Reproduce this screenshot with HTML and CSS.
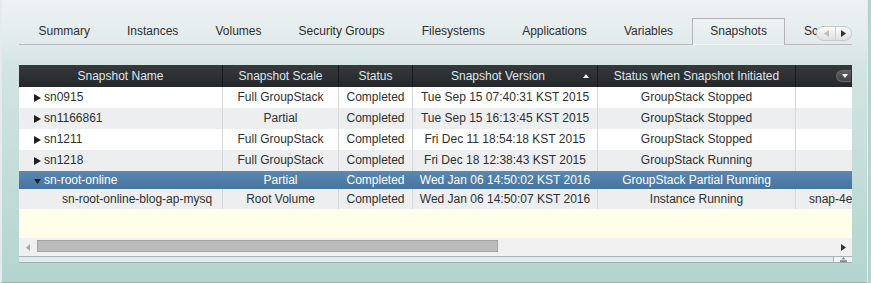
FILE: index.html
```html
<!DOCTYPE html>
<html>
<head>
<meta charset="utf-8">
<title>Snapshots</title>
<link rel="stylesheet" href="styles.css">
</head>
<body>
<div class="panel">
  <div class="tabbar">
    <div class="tabs">
      <div class="tab">Summary</div>
      <div class="tab">Instances</div>
      <div class="tab">Volumes</div>
      <div class="tab">Security Groups</div>
      <div class="tab">Filesystems</div>
      <div class="tab">Applications</div>
      <div class="tab">Variables</div>
      <div class="tab active">Snapshots</div>
      <div class="tab">Scripts</div>
    </div>
    <div class="tab-scroller">
      <span class="ts-btn ts-prev"><svg width="5" height="7" viewBox="0 0 5 7"><path d="M5 0V7L0 3.5Z"/></svg></span>
      <span class="ts-btn ts-next"><svg width="5" height="7" viewBox="0 0 5 7"><path d="M0 0V7L5 3.5Z"/></svg></span>
    </div>
  </div>

  <div class="grid">
    <div class="grid-row grid-head">
      <div class="cell">Snapshot Name</div>
      <div class="cell">Snapshot Scale</div>
      <div class="cell">Status</div>
      <div class="cell sorted"><span class="label">Snapshot Version</span><span class="sort"><svg width="6" height="4" viewBox="0 0 6 4"><path d="M0 4L3 0L6 4Z"/></svg></span></div>
      <div class="cell">Status when Snapshot Initiated</div>
      <div class="cell menu-cell"><span class="col-menu"><svg width="6" height="4" viewBox="0 0 6 4"><path d="M0 0H6L3 4Z"/></svg></span></div>
    </div>

    <div class="grid-row row">
      <div class="cell name"><svg class="twisty" width="7" height="8" viewBox="0 0 7 8"><path d="M0 0L7 4L0 8Z"/></svg>sn0915</div>
      <div class="cell">Full GroupStack</div>
      <div class="cell">Completed</div>
      <div class="cell">Tue Sep 15 07:40:31 KST 2015</div>
      <div class="cell">GroupStack Stopped</div>
      <div class="cell extra"></div>
    </div>
    <div class="grid-row row alt">
      <div class="cell name"><svg class="twisty" width="7" height="8" viewBox="0 0 7 8"><path d="M0 0L7 4L0 8Z"/></svg>sn1166861</div>
      <div class="cell">Partial</div>
      <div class="cell">Completed</div>
      <div class="cell">Tue Sep 15 16:13:45 KST 2015</div>
      <div class="cell">GroupStack Stopped</div>
      <div class="cell extra"></div>
    </div>
    <div class="grid-row row">
      <div class="cell name"><svg class="twisty" width="7" height="8" viewBox="0 0 7 8"><path d="M0 0L7 4L0 8Z"/></svg>sn1211</div>
      <div class="cell">Full GroupStack</div>
      <div class="cell">Completed</div>
      <div class="cell">Fri Dec 11 18:54:18 KST 2015</div>
      <div class="cell">GroupStack Stopped</div>
      <div class="cell extra"></div>
    </div>
    <div class="grid-row row alt">
      <div class="cell name"><svg class="twisty" width="7" height="8" viewBox="0 0 7 8"><path d="M0 0L7 4L0 8Z"/></svg>sn1218</div>
      <div class="cell">Full GroupStack</div>
      <div class="cell">Completed</div>
      <div class="cell">Fri Dec 18 12:38:43 KST 2015</div>
      <div class="cell">GroupStack Running</div>
      <div class="cell extra"></div>
    </div>
    <div class="grid-row row selected">
      <div class="cell name"><svg class="twisty down" width="7" height="5" viewBox="0 0 7 5"><path d="M0 0H7L3.5 5Z"/></svg>sn-root-online</div>
      <div class="cell">Partial</div>
      <div class="cell">Completed</div>
      <div class="cell">Wed Jan 06 14:50:02 KST 2016</div>
      <div class="cell">GroupStack Partial Running</div>
      <div class="cell extra"></div>
    </div>
    <div class="grid-row row alt child">
      <div class="cell child-name">sn-root-online-blog-ap-mysq</div>
      <div class="cell">Root Volume</div>
      <div class="cell">Completed</div>
      <div class="cell">Wed Jan 06 14:50:07 KST 2016</div>
      <div class="cell">Instance Running</div>
      <div class="cell extra">snap-4e</div>
    </div>

    <div class="empty"></div>

    <div class="hscroll">
      <span class="hs-btn hs-prev"><svg width="4" height="7" viewBox="0 0 4 7"><path d="M4 0V7L0 3.5Z"/></svg></span>
      <span class="hs-thumb"></span>
      <span class="hs-btn hs-next"><svg width="5" height="7" viewBox="0 0 5 7"><path d="M0 0V7L5 3.5Z"/></svg></span>
    </div>

    <div class="hs-bottom">
      <span class="vs-track"></span>
      <span class="vs-corner"><svg width="7" height="5" viewBox="0 0 7 5"><path d="M1.5 2.5L3.5 0L5.5 2.5Z" fill="#888"/><rect x="0" y="3.5" width="7" height="1.2" fill="#555"/></svg></span>
    </div>
  </div>
</div>
</body>
</html>
```

FILE: styles.css
```css
* {
  box-sizing: border-box;
}

html,
body {
  margin: 0;
  padding: 0;
}

body {
  width: 871px;
  height: 283px;
  overflow: hidden;
  background: #b2d4cd;
  font-family: "Liberation Sans", Arial, sans-serif;
  font-size: 12px;
  color: #2f2f2f;
}

.panel {
  width: 868px;
  height: 283px;
  border-left: 2px solid #e6eaea;
  border-right: 1px solid #e2ecea;
  border-bottom: 1px solid #a3abab;
  background: linear-gradient(to bottom, #eef2f4 0px, #e1eaeb 44px, #d3e4e1 65px, #b3d5ce 283px);
  padding: 18px 0 0 17px;
}

/* ---------- tabs ---------- */
.tabbar {
  position: relative;
  width: 833px;
}

.tabs {
  display: flex;
  height: 27px;
  overflow: hidden;
  padding-left: 1px;
  background: linear-gradient(to top, #bdb9c0 0, #bdb9c0 1px, transparent 1px);
}

.tab {
  flex: none;
  height: 27px;
  padding: 0 17.55px;
  line-height: 24px;
  border: 1px solid transparent;
  border-bottom-color: #bdb9c0;
  white-space: nowrap;
  color: #2e2e2e;
}

.tab.active {
  border-color: #b3b3b3;
  border-bottom-color: transparent;
  background: linear-gradient(to bottom, #eff3f4, #e2ebec);
}

.tab-scroller {
  position: absolute;
  right: 0;
  top: 8px;
  width: 36px;
  height: 15px;
  display: flex;
  border: 1px solid #c9c9c9;
  border-radius: 8px;
  background: linear-gradient(to bottom, #fbfbfb, #dfdfdf);
  overflow: hidden;
}

.ts-btn {
  flex: 1;
  display: flex;
  align-items: center;
  justify-content: center;
}

.ts-prev {
  border-right: 1px solid #d0d0d0;
  padding-left: 2px;
}

.ts-prev svg {
  fill: #bdbdbd;
}

.ts-next svg {
  fill: #303030;
}

/* ---------- grid ---------- */
.grid {
  width: 833px;
  margin-top: 20px;
  overflow: hidden;
}

.grid-row {
  display: grid;
  grid-template-columns: 204px 116px 74px 185px 198px 56px;
}

.cell {
  white-space: nowrap;
  overflow: hidden;
  text-align: center;
}

.grid-head {
  height: 22px;
  line-height: 22px;
  background: linear-gradient(to bottom, #35393c, #25282a);
  color: #dfe7f0;
}

.grid-head .cell {
  border-right: 1px solid #17191a;
}

.grid-head .cell:last-child {
  border-right: none;
}

.sorted {
  display: flex;
}

.sorted .label {
  flex: 1;
  text-align: center;
}

.sort {
  width: 14px;
  display: flex;
  align-items: center;
  padding-bottom: 1px;
}

.sort svg {
  fill: #f2f2f2;
}

.menu-cell {
  display: flex;
  align-items: center;
  justify-content: flex-end;
}

.col-menu {
  width: 15px;
  height: 12px;
  margin-right: 1px;
  border-radius: 6px 0 0 6px;
  background: linear-gradient(to bottom, #5e5e5e, #434343);
  border: 1px solid #6a6a6a;
  border-right: none;
  display: flex;
  align-items: center;
  justify-content: center;
  padding-left: 2px;
}

.col-menu svg {
  fill: #ffffff;
}

.row {
  height: 21px;
  line-height: 21px;
  background: #ffffff;
}

.row.alt {
  background: #eceef0;
}

.row .cell {
  border-right: 1px solid #d7d8d9;
}

.row .cell:last-child {
  border-right: none;
}

.row.selected {
  height: 18px;
  line-height: 18px;
  background: linear-gradient(to bottom, #5b88b0, #4673a0);
  color: #ffffff;
}

.row.selected .cell {
  border-right-color: transparent;
}

.row.child {
  height: 20px;
  line-height: 20px;
}

.cell.name {
  text-align: left;
  padding-left: 15px;
}

.twisty {
  fill: #1e1e1e;
  margin-right: 3px;
  vertical-align: -1px;
}

.twisty.down {
  fill: #17202a;
  vertical-align: 0;
}

.cell.child-name {
  text-align: left;
  padding-left: 43px;
}

.cell.extra {
  text-align: left;
  padding-left: 13px;
}

.empty {
  height: 29px;
  background: #fefeeb;
}

.hscroll {
  height: 18px;
  display: flex;
  align-items: center;
  background: #f0f0f0;
}

.hs-btn {
  width: 18px;
  height: 18px;
  display: flex;
  align-items: center;
  justify-content: center;
}

.hs-prev svg {
  fill: #a9a9a9;
}

.hs-next {
  margin-left: auto;
}

.hs-next svg {
  fill: #333333;
}

.hs-thumb {
  align-self: flex-start;
  margin-top: 2px;
  width: 461px;
  height: 12px;
  background: #bbbbbb;
  border: 1px solid #a3a3a3;
}

.hs-bottom {
  height: 7px;
  display: flex;
  border-top: 1px solid #a9b3b3;
  border-bottom: 1px solid #a3adad;
  background: #f3f5f5;
}

.vs-track {
  flex: 1;
  background: #dcedf6;
  border-right: 1px solid #94c0d6;
}

.vs-corner {
  width: 18px;
  display: flex;
  align-items: center;
  justify-content: center;
}
```
